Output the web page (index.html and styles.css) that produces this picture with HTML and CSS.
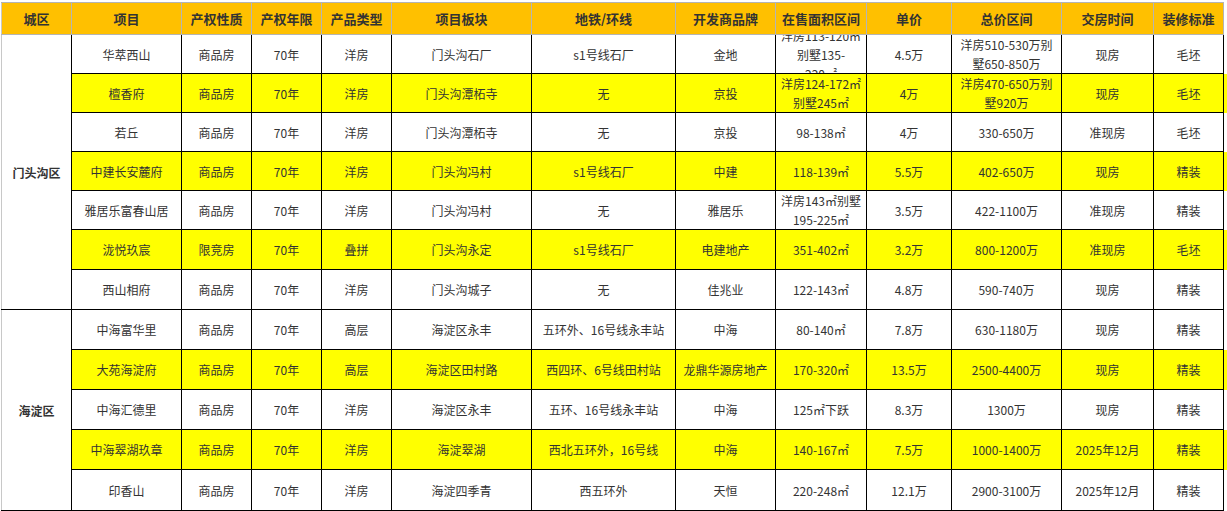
FILE: index.html
```html
<!DOCTYPE html>
<html lang="zh">
<head>
<meta charset="utf-8">
<title>楼盘信息表</title>
<link rel="stylesheet" href="styles.css">
</head>
<body>
<div class="sheet">
<table class="grid">
<colgroup>
<col class="c1"><col class="c2"><col class="c3"><col class="c4"><col class="c5"><col class="c6"><col class="c7"><col class="c8"><col class="c9"><col class="c10"><col class="c11"><col class="c12"><col class="c13"><col class="cx">
</colgroup>
<thead>
<tr class="head">
<th class="dist">城区</th><th class="sel">项目</th><th>产权性质</th><th>产权年限</th><th>产品类型</th><th>项目板块</th><th>地铁/环线</th><th>开发商品牌</th><th>在售面积区间</th><th>单价</th><th>总价区间</th><th>交房时间</th><th>装修标准</th><th class="x"></th>
</tr>
</thead>
<tbody>
<tr class="r39">
<td class="dist" rowspan="7">门头沟区</td>
<td class="p">华萃西山</td><td class="g">商品房</td><td>70年</td><td>洋房</td><td>门头沟石厂</td><td>s1号线石厂</td><td>金地</td><td class="np"><div class="clip"><div>洋房113-120㎡<br>别墅135-<br>220㎡</div></div></td><td>4.5万</td><td>洋房510-530万别<br>墅650-850万</td><td>现房</td><td>毛坯</td><td class="x"></td>
</tr>
<tr class="r39 y">
<td class="p">檀香府</td><td class="g">商品房</td><td>70年</td><td>洋房</td><td>门头沟潭柘寺</td><td>无</td><td>京投</td><td class="np">洋房124-172㎡<br>别墅245㎡</td><td>4万</td><td>洋房470-650万别<br>墅920万</td><td>现房</td><td>毛坯</td><td class="x"></td>
</tr>
<tr class="r39">
<td class="p">若丘</td><td class="g">商品房</td><td>70年</td><td>洋房</td><td>门头沟潭柘寺</td><td>无</td><td>京投</td><td>98-138㎡</td><td>4万</td><td>330-650万</td><td>准现房</td><td>毛坯</td><td class="x"></td>
</tr>
<tr class="r39 y">
<td class="p">中建长安麓府</td><td class="g">商品房</td><td>70年</td><td>洋房</td><td>门头沟冯村</td><td>s1号线石厂</td><td>中建</td><td>118-139㎡</td><td>5.5万</td><td>402-650万</td><td>现房</td><td>精装</td><td class="x"></td>
</tr>
<tr class="r39">
<td class="p">雅居乐富春山居</td><td class="g">商品房</td><td>70年</td><td>洋房</td><td>门头沟冯村</td><td>无</td><td>雅居乐</td><td class="np">洋房143㎡别墅<br>195-225㎡</td><td>3.5万</td><td>422-1100万</td><td>准现房</td><td>精装</td><td class="x"></td>
</tr>
<tr class="r40 y">
<td class="p">泷悦玖宸</td><td class="g">限竞房</td><td>70年</td><td>叠拼</td><td>门头沟永定</td><td>s1号线石厂</td><td>电建地产</td><td>351-402㎡</td><td>3.2万</td><td>800-1200万</td><td>准现房</td><td>毛坯</td><td class="x"></td>
</tr>
<tr class="r40">
<td class="p">西山相府</td><td class="g">商品房</td><td>70年</td><td>洋房</td><td>门头沟城子</td><td>无</td><td>佳兆业</td><td>122-143㎡</td><td>4.8万</td><td>590-740万</td><td>现房</td><td>精装</td><td class="x"></td>
</tr>
<tr class="r40">
<td class="dist" rowspan="5">海淀区</td>
<td class="p">中海富华里</td><td class="g">商品房</td><td>70年</td><td>高层</td><td>海淀区永丰</td><td>五环外、16号线永丰站</td><td>中海</td><td>80-140㎡</td><td>7.8万</td><td>630-1180万</td><td>现房</td><td>精装</td><td class="x"></td>
</tr>
<tr class="r40 y">
<td class="p">大苑海淀府</td><td class="g">商品房</td><td>70年</td><td>高层</td><td>海淀区田村路</td><td>西四环、6号线田村站</td><td>龙鼎华源房地产</td><td>170-320㎡</td><td>13.5万</td><td>2500-4400万</td><td>现房</td><td>精装</td><td class="x"></td>
</tr>
<tr class="r40">
<td class="p">中海汇德里</td><td class="g">商品房</td><td>70年</td><td>洋房</td><td>海淀区永丰</td><td>五环、16号线永丰站</td><td>中海</td><td>125㎡下跃</td><td>8.3万</td><td>1300万</td><td>现房</td><td>精装</td><td class="x"></td>
</tr>
<tr class="r40 y">
<td class="p">中海翠湖玖章</td><td class="g">商品房</td><td>70年</td><td>洋房</td><td>海淀翠湖</td><td>西北五环外，16号线</td><td>中海</td><td>140-167㎡</td><td>7.5万</td><td>1000-1400万</td><td>2025年12月</td><td>精装</td><td class="x"></td>
</tr>
<tr class="r41">
<td class="p">印香山</td><td class="g">商品房</td><td>70年</td><td>洋房</td><td>海淀四季青</td><td>西五环外</td><td>天恒</td><td>220-248㎡</td><td>12.1万</td><td>2900-3100万</td><td>2025年12月</td><td>精装</td><td class="x"></td>
</tr>
</tbody>
</table>
</div>
</body>
</html>
```

FILE: styles.css
```css
html, body {
  margin: 0;
  padding: 0;
  background: #ffffff;
}

.sheet {
  padding: 2px 0 0 1px;
  width: 1227px;
  height: 511px;
  overflow: hidden;
  box-sizing: border-box;
}

.grid {
  border-collapse: collapse;
  table-layout: fixed;
  width: 1226px;
  font-family: "Noto Sans CJK SC", "Noto Sans", sans-serif;
  font-size: 12px;
  line-height: 19px;
  color: #333333;
}

.c1 { width: 70px; }
.c2 { width: 110px; }
.c3 { width: 70px; }
.c4 { width: 70px; }
.c5 { width: 70px; }
.c6 { width: 140px; }
.c7 { width: 144px; }
.c8 { width: 100px; }
.c9 { width: 91px; }
.c10 { width: 85px; }
.c11 { width: 110px; }
.c12 { width: 92px; }
.c13 { width: 70px; }
.cx { width: 4px; }

th, td {
  text-align: center;
  vertical-align: middle;
  padding: 0 2px;
  white-space: nowrap;
  overflow: hidden;
}

th {
  background: #ffc000;
  font-size: 13px;
  font-weight: 700;
  color: #333333;
  border: 1px solid #b4b4b4;
  height: 31px;
}

th.sel {
  position: relative;
  border-left: 1px solid #000000;
}

th.sel::before {
  content: "";
  position: absolute;
  left: 0;
  right: 0;
  top: -3px;
  height: 2px;
  background: #217346;
}

th.x {
  background: #ffffff;
  border: none;
}

td {
  border: 1px solid #000000;
  background: #ffffff;
}

td.g {
  border-left: 1px solid #a0a0a0;
}

td.np {
  padding: 0;
}

td.dist {
  font-weight: 700;
  border-left: 1px solid #c8c8c8;
  border-top: 1px solid #000000;
  border-bottom: 1px solid #000000;
  background: #ffffff;
}

th.dist {
  border-left: 1px solid #c8c8c8;
}

tr.y td {
  background: #ffff00;
}

tr.y td.dist {
  background: #ffffff;
}

td.x {
  border: none;
  border-left: 1px solid #000000;
  padding: 0;
}

tr.r39 td { height: 38px; }
tr.r40 td { height: 39px; }
tr.r41 td { height: 40px; }
td.dist { height: auto; }

.clip {
  height: 38px;
  overflow: hidden;
  display: flex;
  align-items: center;
  justify-content: center;
}
```
